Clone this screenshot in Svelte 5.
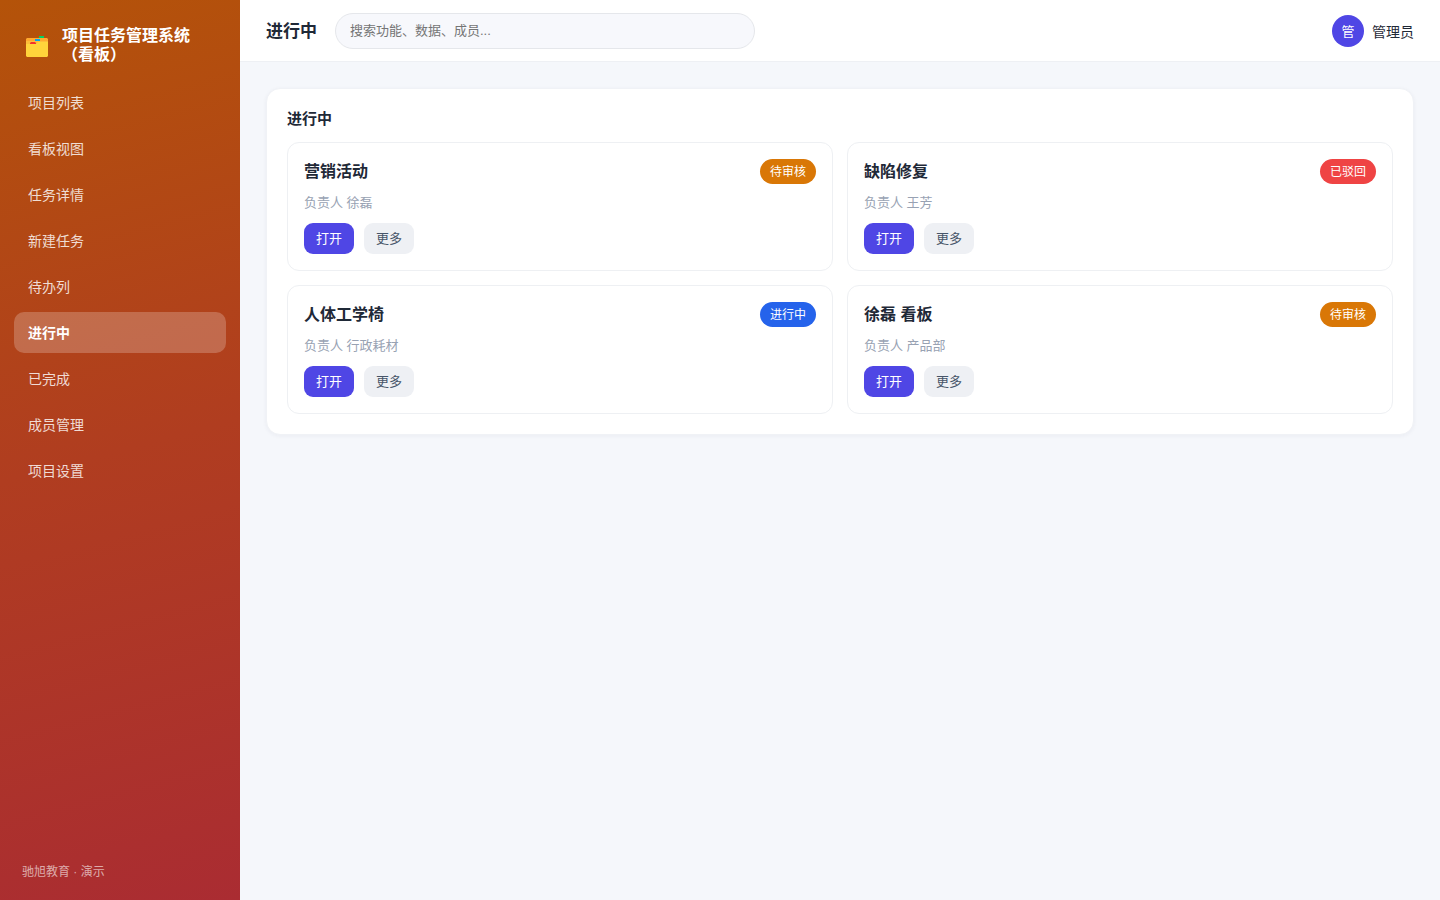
<script lang="ts">
  type Status = 'review' | 'rejected' | 'doing'

  interface Task {
    title: string
    owner: string
    status: Status
  }

  const statusLabels: Record<Status, string> = {
    review: '待审核',
    rejected: '已驳回',
    doing: '进行中'
  }

  const menu = [
    '项目列表',
    '看板视图',
    '任务详情',
    '新建任务',
    '待办列',
    '进行中',
    '已完成',
    '成员管理',
    '项目设置'
  ]

  const tasks: Task[] = [
    { title: '营销活动', owner: '徐磊', status: 'review' },
    { title: '缺陷修复', owner: '王芳', status: 'rejected' },
    { title: '人体工学椅', owner: '行政耗材', status: 'doing' },
    { title: '徐磊 看板', owner: '产品部', status: 'review' }
  ]

  let active = $state('进行中')
  let keyword = $state('')

  function select(event: MouseEvent, item: string) {
    event.preventDefault()
    active = item
  }
</script>

<div class="layout">
  <aside class="sidebar">
    <div class="brand">
      <svg class="logo" viewBox="0 -4 22 26" aria-hidden="true">
        <path d="M13 0h5v3h-5z" fill="#00d264" />
        <path d="M1 2h20l1 1v8H0V3z" fill="#ffa92e" />
        <path d="M13 0h5v2h-5z" fill="#00d264" />
        <path d="M0 5h22v8H0z" fill="#fcbe3a" />
        <path d="M9 3h5v2H9z" fill="#00a3f5" />
        <path d="M0 8h10l2-2h10v14l-1 1H1l-1-1z" fill="#ffd43b" />
        <path d="M4 8V7l1-1h4l1 1v1z" fill="#f5322c" />
      </svg>
      <span class="brand-name">项目任务管理系统（看板）</span>
    </div>

    <nav>
      {#each menu as item}
        <a href="#{item}" class:active={item === active} onclick={(e) => select(e, item)}>{item}</a>
      {/each}
    </nav>

    <div class="copyright">驰旭教育 · 演示</div>
  </aside>

  <div class="main">
    <header class="topbar">
      <h1>{active}</h1>
      <input
        class="search"
        type="search"
        aria-label="搜索"
        placeholder="搜索功能、数据、成员..."
        bind:value={keyword}
      />
      <div class="user">
        <span class="avatar">管</span>
        <span>管理员</span>
      </div>
    </header>

    <main class="content">
      <section class="panel">
        <h2>{active}</h2>
        <div class="grid">
          {#each tasks as task}
            <article class="card">
              <div class="card-head">
                <h3>{task.title}</h3>
                <span class="badge {task.status}">{statusLabels[task.status]}</span>
              </div>
              <p class="meta">负责人 {task.owner}</p>
              <div class="actions">
                <button class="primary" type="button">打开</button>
                <button type="button">更多</button>
              </div>
            </article>
          {/each}
        </div>
      </section>
    </main>
  </div>
</div>

<style>
  :global(body) {
    background: #f5f7fb;
  }

  .layout {
    display: flex;
    min-height: 100vh;
    color: #1f2937;
    font-family: 'Liberation Sans', 'Noto Sans CJK SC', sans-serif;
    font-size: 14px;
  }

  .layout * {
    box-sizing: border-box;
  }

  h1,
  h2,
  h3,
  p {
    margin: 0;
  }

  .sidebar {
    display: flex;
    flex-direction: column;
    flex: none;
    width: 240px;
    padding: 22px 14px 20px;
    background: linear-gradient(165deg, #b45309, #b03d20 50%, #aa2c32);
    color: #fff;
  }

  .brand {
    display: flex;
    align-items: center;
    gap: 14px;
    padding: 4px 12px 18px;
  }

  .logo {
    flex: none;
    width: 22px;
    height: 26px;
  }

  .brand-name {
    font-size: 16px;
    font-weight: 700;
    line-height: 19px;
  }

  nav {
    display: flex;
    flex-direction: column;
    gap: 5px;
  }

  nav a {
    padding: 12px 14px 10px;
    border-radius: 10px;
    color: rgba(255, 255, 255, 0.82);
    line-height: 19px;
    text-decoration: none;
  }

  nav a.active {
    background: rgba(255, 255, 255, 0.22);
    color: #fff;
    font-weight: 700;
  }

  .copyright {
    margin-top: auto;
    padding: 0 8px;
    color: rgba(255, 255, 255, 0.6);
    font-size: 12px;
    line-height: 16px;
  }

  .main {
    flex: 1;
    min-width: 0;
  }

  .topbar {
    display: flex;
    align-items: center;
    gap: 18px;
    height: 62px;
    padding: 0 26px;
    border-bottom: 1px solid #eef0f4;
    background: #fff;
  }

  h1 {
    padding-top: 2px;
    font-size: 17px;
    line-height: 24px;
  }

  .search {
    flex: 0 1 420px;
    min-width: 0;
    height: 36px;
    padding: 0 14px;
    border: 1px solid #e5e7eb;
    border-radius: 18px;
    outline: none;
    background: #f7f8fc;
    color: inherit;
    font-family: inherit;
    font-size: 13px;
    appearance: none;
  }

  .search::placeholder {
    color: #757575;
  }

  .user {
    display: flex;
    align-items: center;
    gap: 8px;
    margin-left: auto;
  }

  .avatar {
    display: grid;
    place-items: center;
    width: 32px;
    height: 32px;
    border-radius: 50%;
    background: #4f46e5;
    color: #fff;
    font-size: 13px;
  }

  .content {
    padding: 26px;
  }

  .panel {
    padding: 20px;
    border: 1px solid #f0f2f6;
    border-radius: 14px;
    background: #fff;
    box-shadow: 0 1px 4px rgba(31, 41, 80, 0.05);
  }

  h2 {
    margin-bottom: 13px;
    font-size: 15px;
    line-height: 20px;
  }

  .grid {
    display: grid;
    grid-template-columns: repeat(2, 1fr);
    gap: 14px;
  }

  .card {
    padding: 16px;
    border: 1px solid #eef0f3;
    border-radius: 12px;
  }

  .card-head {
    display: flex;
    align-items: center;
    justify-content: space-between;
  }

  h3 {
    font-size: 16px;
    line-height: 25px;
  }

  .badge {
    padding: 4px 10px 2px;
    border-radius: 13px;
    color: #fff;
    font-size: 12px;
    line-height: 19px;
  }

  .badge.review {
    background: #d97706;
  }

  .badge.rejected {
    background: #ef4444;
  }

  .badge.doing {
    background: #2563eb;
  }

  .meta {
    margin: 9px 0 10px;
    color: #98a2b3;
    font-size: 13px;
    line-height: 20px;
  }

  .actions {
    display: flex;
    gap: 10px;
  }

  button {
    padding: 6px 12px;
    border: 0;
    border-radius: 9px;
    background: #eef0f4;
    color: #475569;
    font-family: inherit;
    font-size: 13px;
    line-height: 19px;
    cursor: pointer;
  }

  button.primary {
    background: #4f46e5;
    color: #fff;
  }
</style>
